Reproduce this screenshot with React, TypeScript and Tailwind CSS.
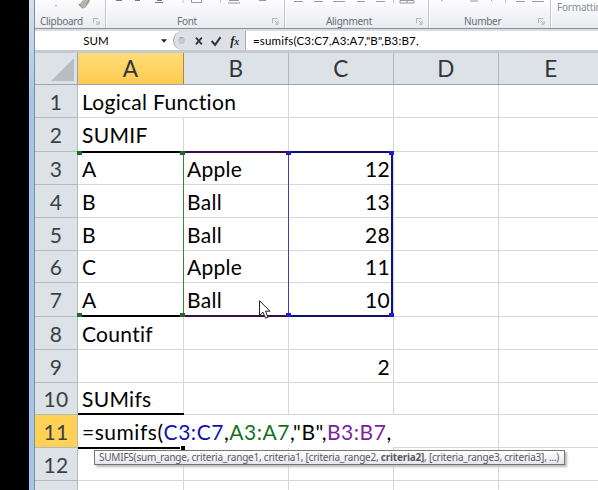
import React from "react";

const line = "border-[#d5d8da]";

type Row = { n: number; h: string; a?: string; b?: string; c?: string };
const rows: Row[] = [
  { n: 1, h: "h-[33px]", a: "Logical Function" },
  { n: 2, h: "h-[34px]", a: "SUMIF" },
  { n: 3, h: "h-[33px]", a: "A", b: "Apple", c: "12" },
  { n: 4, h: "h-[33px]", a: "B", b: "Ball", c: "13" },
  { n: 5, h: "h-[33px]", a: "B", b: "Ball", c: "28" },
  { n: 6, h: "h-[32px]", a: "C", b: "Apple", c: "11" },
  { n: 7, h: "h-[34px]", a: "A", b: "Ball", c: "10" },
  { n: 8, h: "h-[33px]", a: "Countif" },
  { n: 9, h: "h-[33px]", c: "2" },
  { n: 10, h: "h-[32px]", a: "SUMifs" },
  { n: 11, h: "h-[33px]" },
  { n: 12, h: "h-[33px]" },
  { n: 13, h: "h-[33px]" },
];

function Launcher() {
  return (
    <svg width="7" height="7" viewBox="0 0 8 8" fill="none" stroke="#a5a9b0" className="shrink-0">
      <path d="M.5 6V.5H6M3 3l3 3M7 3.5V7H3.5" />
    </svg>
  );
}

function Group({ label, className, pad }: { label: string; className: string; pad: string }) {
  return (
    <div className={`flex shrink-0 items-end border-r border-[#c3c7cd] shadow-[1px_0_0_#fff] ${className}`}>
      <span className={`flex-1 text-[10px] leading-[14px] tracking-[-0.3px] text-[#6a6e75] ${pad}`}>{label}</span>
      <span className="mb-[3px] mr-[5px]"><Launcher /></span>
    </div>
  );
}

function Ribbon() {
  return (
    <div className="relative h-[29px] shrink-0 border-b border-[#8c9098] bg-linear-to-b from-[#fdfdfe] to-[#e9ebef] font-['Noto_Sans',sans-serif]">
      <div className="flex h-[28px]">
        <Group label="Clipboard" className="w-[71px]" pad="pl-[5px]" />
        <Group label="Font" className="w-[179px]" pad="pl-[71px]" />
        <Group label="Alignment" className="w-[144px]" pad="pl-[41px]" />
        <Group label="Number" className="w-[122px]" pad="pl-[35px]" />
        <div className="pl-[6px] text-[10px] leading-[14px] tracking-[-0.2px] text-[#8b8e94]">Formatting</div>
      </div>
      <svg className="absolute left-0 top-0" width="563" height="12" viewBox="35 0 563 12" fill="none">
        <path d="M83 0h7l-1 3-4 5-3 .500-4-4 2-1z" fill="#b7b5b0" />
        <path d="M79 4l4 4M89 0l-3 5" stroke="#8f8d89" />
        <path d="M55 5.500h2" stroke="#aaa" />
        <path d="M116 .5h6M135 .5h5M155 2.500h8M157 .5h5" stroke="#777" />
        <path d="M183 0v3M220.500 0v3M393.500 0v3M505.500 0v3" stroke="#c3c7cd" />
        <path d="M191.500 0v2.500h10v-2.500M228 3h12M229 .5h10M259 .5h7" stroke="#999" />
        <path d="M294 1.500h9M314 1.500h9M333 1.500h12M357 1.500h8M376 1.500h9" stroke="#999" />
        <path d="M400 .5h14v2.500h-14zM407 0v3" stroke="#999" />
        <path d="M442 0v1.500M470 1h8M491 0l1 1M516 1.500h9M532 1.500h12" stroke="#999" />
      </svg>
    </div>
  );
}

function FormulaBar() {
  return (
    <div className="flex h-[24px] shrink-0 items-center border-b-[3px] border-[#c5cad1] bg-white pt-[2px] shadow-[inset_0_2px_0_#d9dde2]">
      <div className="flex h-full w-[138px] items-center font-['Lato',sans-serif]">
        <span className="w-[122px] text-center text-[11.5px] leading-none text-black">SUM</span>
        <svg width="6" height="4" viewBox="0 0 7 4" className="ml-[4px]"><path d="M0 0h7L3.500 4z" fill="#222" /></svg>
      </div>
      <div className="flex h-full w-[72px] items-center rounded-l-full border-l border-[#9da3ab] bg-[#dde1e7] pl-[4px]">
        <span className="h-[7px] w-[7px] rounded-full border border-[#c3c7ce] border-t-[#979da6] bg-[#c7ccd4]" />
        <svg width="54" height="16" viewBox="0 0 54 16" fill="none" stroke="#30343a" className="ml-[7px]">
          <path d="M4 4.500l6 7M10 4.500l-6 7" strokeWidth="1.800" />
          <path d="M20 8l3.500 4L29 4" strokeWidth="2" />
          <text x="39" y="12" fontSize="13" stroke="none" fill="#222" fontStyle="italic" fontWeight="bold" fontFamily="Liberation Serif">f</text>
          <text x="43" y="12.500" fontSize="10" stroke="none" fill="#222" fontStyle="italic" fontWeight="bold" fontFamily="Liberation Serif">x</text>
        </svg>
      </div>
      <div className="flex h-full flex-1 items-center border-l border-[#a4a9b0] pl-[7px] font-['Lato',sans-serif] text-[11.5px] tracking-[0.17px] text-black">
        =sumifs(C3:C7,A3:A7,"B",B3:B7,
      </div>
    </div>
  );
}

function Handle({ className }: { className: string }) {
  return <span className={`absolute h-[4px] w-[5px] ${className}`} />;
}

function Sheet() {
  return (
    <div className="relative flex-1 font-['Lato',sans-serif] text-[21px] tracking-[0.3px] [font-variant-ligatures:none]">
      <div className="flex h-[32px] border-b border-[#9fa6ad] bg-[#dde2e6] text-[22.5px] text-[#30363c]">
        <div className="flex w-[43px] shrink-0 items-end justify-end border-r border-[#9aa0a6] pb-[3px] pr-[3px]">
          <svg width="23" height="23"><path d="M23 0v23H0z" fill="#b7bdc1" /></svg>
        </div>
        <div className="flex w-[106px] shrink-0 items-center justify-center border-r border-[#a58b43] bg-linear-to-b from-[#ffdb78] to-[#fdcb50]">A</div>
        {["B", "C", "D", "E"].map((c) => (
          <div key={c} className="flex w-[105px] shrink-0 items-center justify-center border-r border-[#b0b6bc]">{c}</div>
        ))}
      </div>
      {rows.map((r) => (
        <div key={r.n} className={`flex text-black ${r.h}`}>
          <div className={`flex w-[43px] shrink-0 items-center justify-center border-b border-r border-[#b3bac0] pt-px text-[#3a4046] ${r.n === 11 ? "bg-[#ffd255]" : "bg-[#dde2e6]"}`}>{r.n}</div>
          {r.n === 11 ? (
            <div className="relative flex w-[526px] shrink-0 items-center">
              <div className="flex h-full w-[315px] shrink-0 items-center whitespace-pre bg-white pl-[4px] pt-px tracking-[0.53px]">
                =sumifs(<span className="text-[#1111b5]">C3:C7</span>,<span className="text-[#15701f]">A3:A7</span>,"B",<span className="text-[#7a249c]">B3:B7</span>,
              </div>
              <div className={`h-full w-[106px] shrink-0 border-b border-r ${line}`} />
              <div className={`h-full w-[105px] shrink-0 border-b ${line}`} />
              <span className="absolute -top-[2px] left-0 h-[2px] w-[106px] bg-black" />
              <span className="absolute -bottom-px left-0 h-[2px] w-[102px] bg-black" />
              <span className="absolute -bottom-[2px] left-[103px] h-[4px] w-[4px] bg-black" />
            </div>
          ) : (
            <>
              <div className={`flex w-[106px] shrink-0 items-center whitespace-nowrap border-b pl-[4px] pt-px ${line} ${r.n === 1 ? "" : "border-r"}`}>{r.a}</div>
              <div className={`flex w-[105px] shrink-0 items-center border-b border-r pl-[3px] pt-px ${line}`}>{r.b}</div>
              <div className={`flex w-[105px] shrink-0 items-center justify-end border-b border-r pr-[3px] pt-px ${line}`}>{r.c}</div>
              <div className={`w-[105px] shrink-0 border-b border-r ${line}`} />
              <div className={`w-[105px] shrink-0 border-b ${line}`} />
            </>
          )}
        </div>
      ))}
      <div className="absolute left-[43px] top-[98px] h-[166px] w-[106px] border-y-2 border-r border-y-black border-r-[#3b853b]">
        <Handle className="-left-px -top-[2px] bg-[#1c6b24]" />
        <Handle className="-bottom-[2px] -left-px bg-[#1c6b24]" />
      </div>
      <div className="absolute left-[149px] top-[98px] h-[166px] w-[105px] border-y-2 border-[#35104a]">
        <Handle className="-left-[4px] -top-[2px] bg-[#1c6b24]" />
        <Handle className="-bottom-[2px] -left-[4px] bg-[#1c6b24]" />
      </div>
      <div className="absolute left-[253px] top-[98px] h-[166px] w-[105px] border-y-2 border-l border-r-2 border-l-[#3f3fb0] border-r-[#11118a] border-y-[#101070]">
        <Handle className="-left-[3px] -top-[2px] bg-[#2418d0]" />
        <Handle className="-right-[3px] -top-[2px] bg-[#2418d0]" />
        <Handle className="-bottom-[2px] -left-[3px] bg-[#2418d0]" />
        <Handle className="-bottom-[2px] -right-[3px] bg-[#2418d0]" />
      </div>
      <svg className="absolute left-[224px] top-[247px]" width="12" height="20" viewBox="0 0 12 20">
        <path d="M.5 .7v15l3.500-3.500 2.500 6 2.500-1-2.500-6h4.500z" fill="#fff" stroke="#222" />
      </svg>
      <div className="absolute left-[59px] top-[397px] flex h-[15px] w-[471px] items-center whitespace-nowrap border border-[#767676] bg-linear-to-b from-white to-[#e5e5f0] pl-[4px] font-['Noto_Sans',sans-serif] text-[10px] tracking-[-0.22px] text-[#5a5a5f] shadow-[2px_2px_2px_#bbb]">
        SUMIFS(sum_range, criteria_range1, criteria1, [criteria_range2,&nbsp;<b>criteria2]</b>, [criteria_range3, criteria3], ...)
      </div>
    </div>
  );
}

export default function App() {
  return (
    <div className="flex h-[490px] w-[598px] overflow-hidden bg-white">
      <div className="w-[29px] shrink-0 bg-black" />
      <div className="w-[6px] shrink-0 border-r border-[#7e8d9d] bg-linear-to-b from-[#d4e2f0] to-[#a4c6e8] to-20%" />
      <div className="flex w-[563px] shrink-0 flex-col overflow-hidden">
        <Ribbon />
        <FormulaBar />
        <Sheet />
      </div>
    </div>
  );
}
